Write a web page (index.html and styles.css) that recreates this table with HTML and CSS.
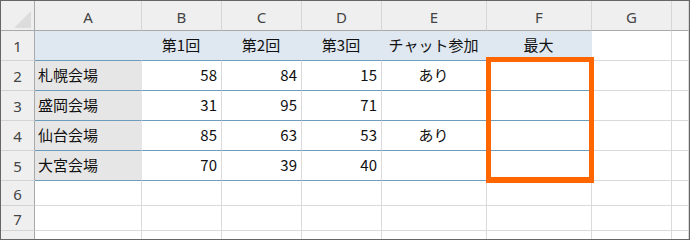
FILE: index.html
```html
<!DOCTYPE html>
<html lang="ja">
<head>
  <meta charset="UTF-8">
  <title>会場別スコア</title>
  <link rel="stylesheet" href="styles.css">
</head>

<body>
  <div class="frame">
    <div class="sheet">
      <!-- column letters -->
      <div class="corner">
        <svg width="17" height="17" viewBox="0 0 17 17"><polygon points="17,0 17,17 0,17" fill="#dcdcdc"/></svg>
      </div>
      <div class="col-head">A</div>
      <div class="col-head">B</div>
      <div class="col-head">C</div>
      <div class="col-head">D</div>
      <div class="col-head">E</div>
      <div class="col-head">F</div>
      <div class="col-head">G</div>
      <div class="col-head"></div>

      <!-- row 1: table header -->
      <div class="row-head">1</div>
      <div class="cell band"></div>
      <div class="cell band mid">第1回</div>
      <div class="cell band mid">第2回</div>
      <div class="cell band mid">第3回</div>
      <div class="cell band mid">チャット参加</div>
      <div class="cell band mid">最大</div>
      <div class="cell"></div>
      <div class="cell"></div>

      <div class="row-head">2</div>
      <div class="cell label">札幌会場</div>
      <div class="cell tbl num">58</div>
      <div class="cell tbl num">84</div>
      <div class="cell tbl num">15</div>
      <div class="cell tbl mid">あり</div>
      <div class="cell tbl"></div>
      <div class="cell"></div>
      <div class="cell"></div>

      <div class="row-head">3</div>
      <div class="cell label">盛岡会場</div>
      <div class="cell tbl num">31</div>
      <div class="cell tbl num">95</div>
      <div class="cell tbl num">71</div>
      <div class="cell tbl mid"></div>
      <div class="cell tbl"></div>
      <div class="cell"></div>
      <div class="cell"></div>

      <div class="row-head">4</div>
      <div class="cell label">仙台会場</div>
      <div class="cell tbl num">85</div>
      <div class="cell tbl num">63</div>
      <div class="cell tbl num">53</div>
      <div class="cell tbl mid">あり</div>
      <div class="cell tbl"></div>
      <div class="cell"></div>
      <div class="cell"></div>

      <div class="row-head">5</div>
      <div class="cell label">大宮会場</div>
      <div class="cell tbl num">70</div>
      <div class="cell tbl num">39</div>
      <div class="cell tbl num">40</div>
      <div class="cell tbl mid"></div>
      <div class="cell tbl"></div>
      <div class="cell"></div>
      <div class="cell"></div>

      <div class="row-head">6</div>
      <div class="cell"></div><div class="cell"></div><div class="cell"></div><div class="cell"></div>
      <div class="cell"></div><div class="cell"></div><div class="cell"></div><div class="cell"></div>

      <div class="row-head">7</div>
      <div class="cell"></div><div class="cell"></div><div class="cell"></div><div class="cell"></div>
      <div class="cell"></div><div class="cell"></div><div class="cell"></div><div class="cell"></div>

      <div class="row-head">8</div>
      <div class="cell"></div><div class="cell"></div><div class="cell"></div><div class="cell"></div>
      <div class="cell"></div><div class="cell"></div><div class="cell"></div><div class="cell"></div>

      <!-- highlight around F2:F5 -->
      <div class="mark"></div>
    </div>
  </div>
</body>
</html>
```

FILE: styles.css
```css
body {
  margin: 0;
  padding: 0;
  background-color: #fff;
  font-family: "Noto Sans CJK JP", "Noto Sans", sans-serif;
  font-size: 15px;
  color: #111;
}

.frame {
  width: 690px;
  height: 240px;
  box-sizing: border-box;
  border: 1px solid #666;
  overflow: hidden;
}

.sheet {
  position: relative;
  display: grid;
  grid-template-columns: 34px 107px 80px 80px 80px 105px 105px 80px 17px;
  grid-template-rows: 30px 30px 30px 30px 30px 30px 25px 25px 25px;
}

.sheet > div {
  box-sizing: border-box;
}

.corner {
  display: flex;
  align-items: flex-end;
  justify-content: flex-end;
  padding: 0 3px 2px 0;
  background-color: #efefef;
  border-right: 1px solid #a9a9a9;
  border-bottom: 1px solid #a9a9a9;
}

.corner svg {
  display: block;
}

.col-head {
  display: flex;
  align-items: center;
  justify-content: center;
  padding-top: 2px;
  background-color: #efefef;
  border-right: 1px solid #d6d6d6;
  border-bottom: 1px solid #a9a9a9;
  font-family: "Noto Sans", sans-serif;
  color: #444;
}

.row-head {
  display: flex;
  align-items: center;
  justify-content: center;
  padding-top: 1px;
  background-color: #efefef;
  border-right: 1px solid #a9a9a9;
  border-bottom: 1px solid #d4d4d4;
  font-family: "Noto Sans", sans-serif;
  color: #444;
}

.cell {
  display: flex;
  align-items: center;
  padding: 0 4px 2px 3px;
  border-right: 1px solid #dadada;
  border-bottom: 1px solid #dadada;
  white-space: nowrap;
}

.band {
  background-color: #dfe8f1;
  border-right-color: #dfe8f1;
  border-bottom-color: #6f9bbd;
}

.label {
  background-color: #e7e6e6;
  border-right-color: #e7e6e6;
  border-bottom-color: #6f9bbd;
}

.tbl {
  border-bottom-color: #6f9bbd;
}

.num {
  justify-content: flex-end;
}

.mid {
  justify-content: center;
}

.mark {
  position: absolute;
  left: 485px;
  top: 56px;
  width: 108px;
  height: 126px;
  box-sizing: border-box;
  border: 5px solid #ff6600;
  border-bottom-width: 6px;
}
```
